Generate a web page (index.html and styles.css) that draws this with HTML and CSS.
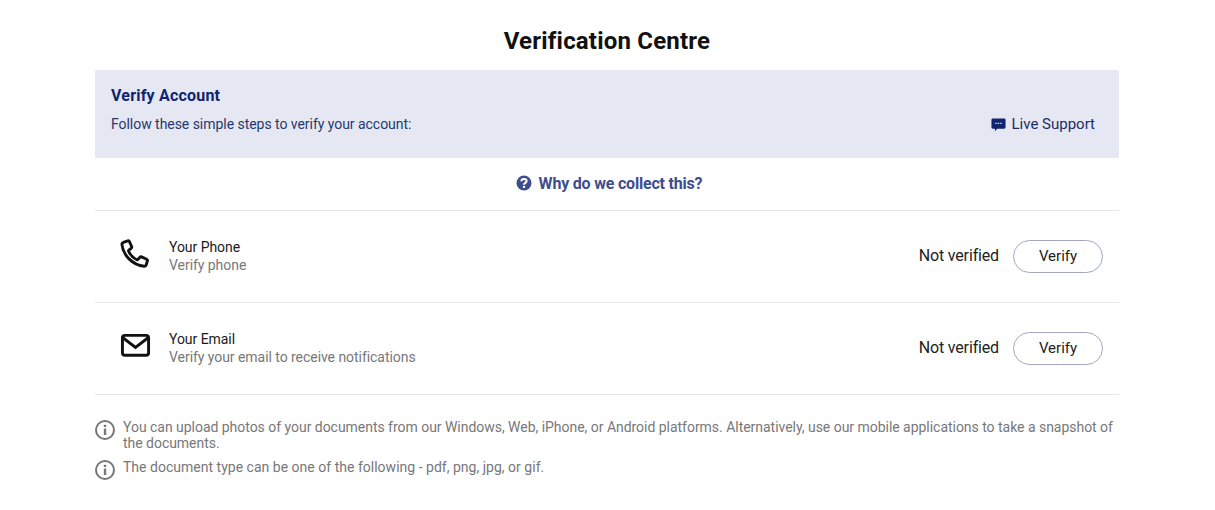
FILE: index.html
```html
<!DOCTYPE html>
<html lang="en">
<head>
<meta charset="utf-8">
<title>Verification Centre</title>
<link rel="stylesheet" href="styles.css">
</head>
<body>
<main class="page">
  <h1 class="title">Verification Centre</h1>
  <section class="banner">
    <div>
      <h2 class="banner-title">Verify Account</h2>
      <p class="banner-text">Follow these simple steps to verify your account:</p>
    </div>
    <a class="support">
      <svg class="support-icon" viewBox="0 0 16 16"><path fill="#10246f" d="M1.8 1.500h12.400c.7 0 1.300.6 1.300 1.300v8.400c0 .7-.6 1.300-1.300 1.300H6.600l-2.400 2.600v-2.600H1.800c-.7 0-1.300-.6-1.300-1.300V2.800c0-.7.6-1.300 1.300-1.300z"/><path fill="#e5e8f2" d="M4.600 6h1.500v1.500H4.600zM7.200 6h1.500v1.500H7.200zM9.900 6h1.500v1.500H9.900z"/></svg>
      <span>Live Support</span>
    </a>
  </section>
  <div class="why">
    <svg class="why-icon" viewBox="0 0 16 16"><circle cx="8" cy="8" r="7.500" fill="#3d4d8f"/><path fill="none" stroke="#fff" stroke-width="2" d="M5.400 6.200c0-1.500 1.100-2.300 2.600-2.300s2.600.8 2.600 2.100c0 1.900-2.600 1.900-2.600 3.800"/><rect x="6.900" y="10.900" width="2.200" height="2.100" fill="#fff"/></svg>
    <span>Why do we collect this?</span>
  </div>
  <div class="row">
    <svg class="row-icon" viewBox="0 -1 32 32"><path fill="none" stroke="#111" stroke-width="3" stroke-linejoin="round" d="M3.500 3.500 8 1.900c.8-.3 1.400 0 1.700.7l2.300 5.200c.3.700.2 1.200-.3 1.600l-2.500 2.100c-.4.300-.5.700-.3 1.200 1.700 3.800 4.800 7 8.500 8.700.5.200.9.100 1.200-.3l2-2.300c.5-.5 1-.6 1.700-.3l5.200 2.400c.7.300 1 .9.800 1.600l-1.200 4.200c-.3 1-1 1.500-2.100 1.400C12.800 27 3 16.500 2 5.600c-.1-.9.500-1.800 1.500-2.100z"/></svg>
    <div class="row-text">
      <div class="row-title">Your Phone</div>
      <div class="row-sub">Verify phone</div>
    </div>
    <span class="status">Not verified</span>
    <button class="verify">Verify</button>
  </div>
  <div class="row">
    <svg class="row-icon" viewBox="0 0 32 32"><rect x="2.500" y="5.500" width="27" height="20.500" rx="2.500" fill="none" stroke="#111" stroke-width="3"/><path fill="none" stroke="#111" stroke-width="3" d="M3 8 16 18 29 8"/></svg>
    <div class="row-text">
      <div class="row-title">Your Email</div>
      <div class="row-sub">Verify your email to receive notifications</div>
    </div>
    <span class="status">Not verified</span>
    <button class="verify">Verify</button>
  </div>
  <ul class="notes">
    <li class="note">
      <svg class="note-icon" viewBox="0 0 20 20"><circle cx="10" cy="10" r="9" fill="none" stroke="#77777a" stroke-width="2"/><rect x="8.800" y="8.500" width="2.400" height="6.500" fill="#77777a"/><rect x="8.800" y="4.800" width="2.400" height="2.200" fill="#77777a"/></svg>
      <span>You can upload photos of your documents from our Windows, Web, iPhone, or Android platforms. Alternatively, use our mobile applications to take a snapshot of the documents.</span>
    </li>
    <li class="note note-short">
      <svg class="note-icon" viewBox="0 0 20 20"><circle cx="10" cy="10" r="9" fill="none" stroke="#77777a" stroke-width="2"/><rect x="8.800" y="8.500" width="2.400" height="6.500" fill="#77777a"/><rect x="8.800" y="4.800" width="2.400" height="2.200" fill="#77777a"/></svg>
      <span>The document type can be one of the following - pdf, png, jpg, or gif.</span>
    </li>
  </ul>
</main>
</body>
</html>
```
FILE: styles.css
```css
* { box-sizing: border-box; }
html, body { margin: 0; padding: 0; background: #fff; }
body { font-family: Roboto, "Noto Sans", sans-serif; color: #111; }
.page { width: 1024px; margin: 0 auto 0 95px; }
.title { margin: 0; height: 70px; padding-top: 25px; font-size: 24px; line-height: 32px; font-weight: 700; letter-spacing: 0.2px; text-align: center; color: #111; }
.banner { height: 88px; background: #e5e8f2; padding: 16px 24px 0 16px; display: flex; justify-content: space-between; border-radius: 2px; }
.banner-title { margin: 0; font-size: 16px; line-height: 20px; font-weight: 700; letter-spacing: 0.2px; color: #10246f; }
.banner-text { margin: 8px 0 0; font-size: 14px; line-height: 20px; letter-spacing: -0.04px; color: #26386f; }
.support { display: flex; align-items: center; gap: 5px; height: 20px; margin-top: 28px; font-size: 15px; line-height: 20px; color: #1d2c68; }
.support-icon { width: 15px; height: 15px; display: block; margin-top: 1px; }
.why { height: 53px; padding: 0 0 2px 4px; border-bottom: 1px solid #e6e6e6; display: flex; align-items: center; justify-content: center; gap: 7px; font-size: 16px; font-weight: 700; letter-spacing: -0.2px; color: #3d4d8f; }
.why-icon { width: 16px; height: 16px; display: block; }
.row { height: 92px; border-bottom: 1px solid #e6e6e6; display: flex; align-items: center; padding: 0 16px 0 25px; }
.row-icon { width: 31px; height: 31px; display: block; flex: none; margin-top: -6px; }
.row-text { flex: 1; margin-left: 18px; margin-top: -1px; }
.row-title { font-size: 14px; line-height: 18px; letter-spacing: -0.05px; color: #1a1a1a; }
.row-sub { font-size: 14px; line-height: 18px; letter-spacing: -0.05px; color: #77777a; }
.status { font-size: 16px; line-height: 20px; letter-spacing: -0.15px; color: #222; margin-top: -2px; }
.verify { width: 90px; height: 33px; margin-left: 14px; padding: 0 0 2px; border: 1px solid #a3a7c2; border-radius: 17px; background: #fff; font-family: inherit; font-size: 15px; color: #222; }
.notes { list-style: none; margin: 0; padding: 24px 0 0; }
.note { display: flex; gap: 8px; font-size: 14px; line-height: 16px; letter-spacing: -0.03px; color: #77777a; margin-bottom: 8px; }
.note-short { letter-spacing: 0.015px; }
.note-icon { width: 20px; height: 20px; flex: none; display: block; margin-top: 1px; }
```
